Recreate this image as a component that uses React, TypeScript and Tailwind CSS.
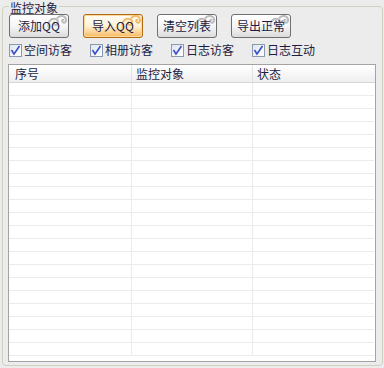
import React from 'react';

const font = { fontFamily: '"Noto Sans CJK SC", "Liberation Sans", sans-serif' };

function Swirl({ color }: { color: string }) {
  return (
    <svg width="22" height="15" viewBox="0 0 22 15" className="absolute right-0 top-0">
      <path d="M3 13 C1 7 5 3 9.5 4 C13 5 13 10 9.5 10 C7.5 10 7.5 7.5 9 7" fill="none" stroke={color} strokeWidth="2" />
      <path d="M11 3.5 C13 0 19 0 20 4 C21 7.5 17.5 8.5 16.5 6.8 C15.5 5 17.5 4 18 5.5" fill="none" stroke={color} strokeWidth="2" />
    </svg>
  );
}

function Btn({ label, active }: { label: string; active?: boolean }) {
  return (
    <div
      className={
        'relative w-[60px] h-[24px] rounded-[3px] border flex items-center justify-center overflow-hidden text-[12px] text-[#1c1c44] ' +
        (active
          ? 'border-[#b36b12] bg-gradient-to-b from-[#fffdf6] via-[#fff3d6] to-[#f7b85a] shadow-[inset_0_0_0_1px_#fcd9a0]'
          : 'border-[#6f6f6f] bg-gradient-to-b from-[#ffffff] via-[#f6f6f6] to-[#dcdcdc]')
      }
    >
      <Swirl color={active ? '#f0bb6e' : '#bcbcbc'} />
      <span className="relative">{label}</span>
    </div>
  );
}

function Check({ label }: { label: string }) {
  return (
    <div className="flex items-center w-[81px] h-[14px]">
      <div className="w-[13px] h-[13px] border border-[#8a9bb0] bg-gradient-to-br from-[#dfe6ee] to-[#ffffff] flex items-center justify-center">
        <svg width="11" height="11" viewBox="0 0 11 11">
          <path d="M1.5 5 L4 9 L9.5 1" fill="none" stroke="#3a4ec8" strokeWidth="1.6" />
        </svg>
      </div>
      <span className="ml-[2px] text-[12px] leading-[14px] text-[#1c1c44]">{label}</span>
    </div>
  );
}

export default function App() {
  const rows = Array.from({ length: 21 });
  return (
    <div className="w-[384px] h-[368px] bg-[#ececec] pt-[6px] pl-[2px]" style={font}>
      <div className="relative w-[381px] h-[360px] border border-[#d0d0bf] rounded-[4px]">
        <div className="absolute -top-[6px] left-[6px] px-[1px] bg-[#ececec] text-[12px] leading-[13px] text-[#1c1c44]">
          监控对象
        </div>

        <div className="flex gap-[14px] pl-[6px] pt-[7px]">
          <Btn label="添加QQ" />
          <Btn label="导入QQ" active />
          <Btn label="清空列表" />
          <Btn label="导出正常" />
        </div>

        <div className="flex pl-[6px] mt-[5px]">
          <Check label="空间访客" />
          <Check label="相册访客" />
          <Check label="日志访客" />
          <Check label="日志互动" />
        </div>

        <div className="ml-[5px] mt-[7px] w-[368px] h-[298px] border border-[#a3a3a3] bg-white">
          <div className="flex h-[18px] border-b border-[#d6d6d6] bg-gradient-to-b from-[#ffffff] to-[#efeff1] text-[12px] leading-[17px] text-[#1c1c44]">
            <div className="w-[123px] pl-[6px] border-r border-[#e2e2e2]">序号</div>
            <div className="w-[121px] pl-[4px] border-r border-[#e2e2e2]">监控对象</div>
            <div className="flex-1 pl-[4px]">状态</div>
          </div>
          <div className="w-[365px]">
            {rows.map((_, i) => (
              <div key={i} className="flex h-[13px] border-b border-[#ebebeb]">
                <div className="w-[123px] border-r border-[#ebebeb]" />
                <div className="w-[121px] border-r border-[#ebebeb]" />
                <div className="flex-1" />
              </div>
            ))}
          </div>
        </div>
      </div>
    </div>
  );
}
